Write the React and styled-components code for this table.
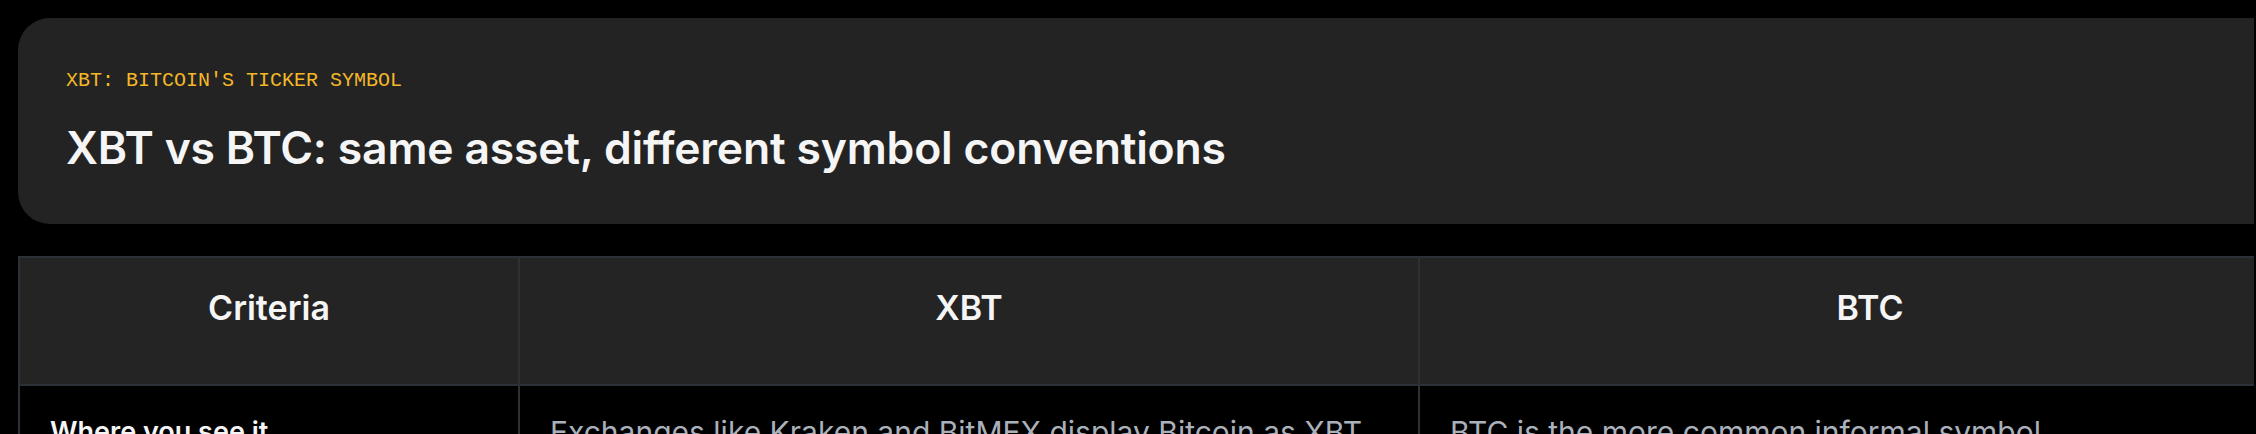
import React from 'react';
import styled, { createGlobalStyle } from 'styled-components';

const GlobalStyle = createGlobalStyle`
  html, body {
    margin: 0;
    padding: 0;
    background: #000000;
    font-family: Inter, "Noto Sans", sans-serif;
  }
`;

const Page = styled.div`
  width: 2254px;
  height: 434px;
  overflow: hidden;
`;

const Content = styled.main`
  width: 2304px;
  padding: 18px;
  display: flex;
  flex-direction: column;
  gap: 32px;
`;

const HeroCard = styled.section`
  background: #232323;
  border-radius: 32px;
  padding: 48px 48px 49px;
`;

const Eyebrow = styled.p`
  margin: 0 0 25px;
  font-family: "Liberation Mono", "DejaVu Sans Mono", monospace;
  font-size: 20px;
  line-height: 30px;
  color: #f4b728;
  text-transform: uppercase;
`;

const Title = styled.h1`
  margin: 0;
  font-size: 44.5px;
  line-height: 54px;
  font-weight: 600;
  color: #f5f5f5;
  letter-spacing: -0.2px;
`;

const CompareTable = styled.table`
  width: 2304px;
  border-collapse: collapse;
  table-layout: fixed;
  border: 2px solid #2b3136;
`;

const HeadCell = styled.th`
  background: #242424;
  border: 2px solid #2b3136;
  padding: 26px 30px 52px;
  font-size: 34px;
  line-height: 48px;
  font-weight: 600;
  color: #f5f5f5;
  text-align: center;
`;

const BodyCell = styled.td`
  border: 2px solid #2b3136;
  padding: 25px 30px;
  font-size: ${props => (props.label ? '27px' : '30px')};
  line-height: 42px;
  vertical-align: top;
  color: ${props => (props.label ? '#f5f5f5' : '#aab1bb')};
  font-weight: ${props => (props.label ? 600 : 400)};
`;

const rows = [
  {
    label: 'Where you see it',
    xbt: 'Exchanges like Kraken and BitMEX display Bitcoin as XBT',
    btc: 'BTC is the more common informal symbol'
  },
  {
    label: 'Standard',
    xbt: 'Follows the ISO 4217 convention for non-national currencies',
    btc: 'Not ISO-compliant, but widely adopted by the industry'
  }
];

export default function App() {
  return (
    <>
      <GlobalStyle />
      <Page>
        <Content>
          <HeroCard>
            <Eyebrow>XBT: Bitcoin's ticker symbol</Eyebrow>
            <Title>XBT vs BTC: same asset, different symbol conventions</Title>
          </HeroCard>

          <CompareTable>
            <colgroup>
              <col style={{ width: '500px' }} />
              <col style={{ width: '900px' }} />
              <col />
            </colgroup>
            <thead>
              <tr>
                <HeadCell>Criteria</HeadCell>
                <HeadCell>XBT</HeadCell>
                <HeadCell>BTC</HeadCell>
              </tr>
            </thead>
            <tbody>
              {rows.map(row => (
                <tr key={row.label}>
                  <BodyCell label>{row.label}</BodyCell>
                  <BodyCell>{row.xbt}</BodyCell>
                  <BodyCell>{row.btc}</BodyCell>
                </tr>
              ))}
            </tbody>
          </CompareTable>
        </Content>
      </Page>
    </>
  );
}
